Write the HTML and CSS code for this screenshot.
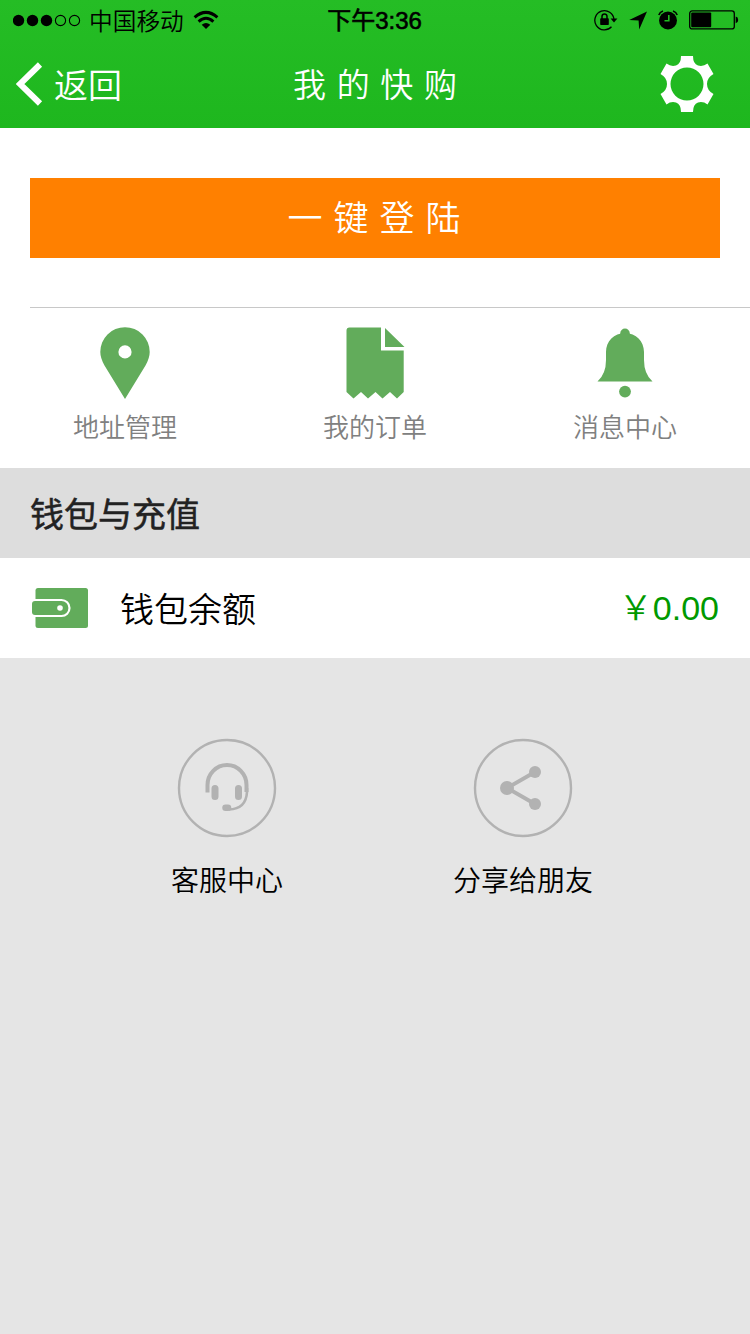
FILE: index.html
```html
<!DOCTYPE html>
<html lang="zh-CN">
<head>
<meta charset="utf-8">
<title>我的快购</title>
<link rel="stylesheet" href="styles.css">
</head>
<body>
<header class="top">
  <div class="status">
    <div class="status-left">
      <svg class="signal" width="69" height="14" viewBox="0 0 69 14">
        <circle cx="5.500" cy="7.500" r="5.700"/><circle cx="19.500" cy="7.500" r="5.700"/><circle cx="33.500" cy="7.500" r="5.700"/>
        <g fill="none" stroke="#000" stroke-width="1.1"><circle cx="47.500" cy="7.500" r="5.100"/><circle cx="61.500" cy="7.500" r="5.100"/></g>
      </svg>
      <span class="carrier">中国移动</span>
      <svg class="wifi" width="26" height="20" viewBox="0 0 26 20">
        <g fill="none" stroke="#000" stroke-width="3"><path d="M1.6 7.4Q13-2.6 24.4 7.4"/><path d="M5.6 11.6Q13 5 20.4 11.6"/></g>
        <path d="M13 19L8.7 14.8Q13 11.2 17.3 14.8Z"/>
      </svg>
    </div>
    <span class="time">下午3:36</span>
    <div class="status-right">
      <svg width="24" height="22" viewBox="0 0 24 22">
        <path d="M17.5 17.8A9.6 9.6 0 1 1 20 10.5" fill="none" stroke="#000" stroke-width="1.3"/>
        <path d="M16.6 9.6H23.4L20 13.6Z"/>
        <rect x="6.2" y="9.3" width="8.6" height="6.7" rx=".8"/>
        <path d="M8 10V7.4a2.5 2.5 0 0 1 5 0V10" fill="none" stroke="#000" stroke-width="1.5"/>
      </svg>
      <svg width="18" height="19" viewBox="0 0 18 19"><path d="M18 .5L10.2 18.5L9.6 9.6L.2 9Z"/></svg>
      <svg width="20" height="20" viewBox="0 0 20 20">
        <circle cx="10" cy="10.5" r="9"/>
        <path d="M.8 5Q1.8 2 5 1M19.2 5Q18.2 2 15 1" fill="none" stroke="#000" stroke-width="1.6"/>
        <path d="M10.8 5V10.8H6.5" fill="none" stroke="#20bb20" stroke-width="1.6"/>
      </svg>
      <svg width="50" height="20" viewBox="0 0 50 20">
        <rect x=".7" y=".9" width="44.6" height="18" rx="2.5" fill="none" stroke="#000" stroke-width="1.3"/>
        <rect x="2.2" y="2.6" width="20" height="14.6" rx="1"/>
        <path d="M46.7 6.5q2.5.5 2.5 3.4t-2.5 3.4z"/>
      </svg>
    </div>
  </div>
  <nav class="nav">
    <div class="back">
      <svg width="27" height="44" viewBox="0 0 27 44"><path d="M24 2.5L4 22L24 41.5" fill="none" stroke="#fff" stroke-width="6"/></svg>
      <span>返回</span>
    </div>
    <h1 class="title">我 的 快 购</h1>
    <svg class="gear" width="54" height="58" viewBox="-27 -29 54 58">
      <path fill="#fff" fill-rule="evenodd" d="M-6-28H6Q6-20 11-18.500Q16-17 20.500-20.500L26.500-10Q20-6.500 20 0Q20 6.500 26.500 10L20.500 20.500Q16 17 11 18.500Q6 20 6 28H-6Q-6 20-11 18.500Q-16 17-20.500 20.500L-26.500 10Q-20 6.500-20 0Q-20-6.500-26.500-10L-20.500-20.500Q-16-17-11-18.500Q-6-20-6-28ZM0-16.500A16.500 16.500 0 1 0 0 16.500A16.500 16.500 0 1 0 0-16.500Z"/>
    </svg>
  </nav>
</header>
<main>
  <section class="login"><button class="login-btn">一 键 登 陆</button></section>
  <section class="shortcuts">
    <div class="shortcut">
      <svg width="60" height="74" viewBox="0 0 60 74"><path fill="#62ac5b" fill-rule="evenodd" d="M30 1.2A24.7 24.7 0 0 1 54.7 26Q54.7 32 50.5 39.5L30 73L9.5 39.5Q5.3 32 5.3 26A24.7 24.7 0 0 1 30 1.2ZM30 19.3A6.6 6.6 0 1 0 30 32.5A6.6 6.6 0 1 0 30 19.3Z"/></svg>
      <span>地址管理</span>
    </div>
    <div class="shortcut">
      <svg width="60" height="74" viewBox="0 0 60 74"><path fill="#62ac5b" d="M4.5 1.5H36V24.500H58.700V66L52 72.500L45 66L37.500 72.500L30.500 66L23 72.500L16 66L8.500 72.500L1.500 66V4.500Q1.500 1.500 4.500 1.500ZM40 2L59.500 21H40Z"/></svg>
      <span>我的订单</span>
    </div>
    <div class="shortcut">
      <svg width="60" height="74" viewBox="0 0 60 74"><g fill="#62ac5b"><circle cx="30" cy="7.4" r="4.8"/><path d="M30 7C41 7 49 15.500 49 26V34Q49 48 57.500 55.500H2.500Q11 48 11 34V26C11 15.500 19 7 30 7Z"/><circle cx="30" cy="65.600" r="5.900"/></g></svg>
      <span>消息中心</span>
    </div>
  </section>
  <h2 class="section-title">钱包与充值</h2>
  <section class="balance">
    <svg width="57" height="42" viewBox="0 0 57 42">
      <rect x="3.500" y="1" width="52.500" height="40" rx="2.500" fill="#62ac5b"/>
      <path d="M3 13H29.500a8 8 0 0 1 0 16H3" fill="none" stroke="#fff" stroke-width="2.200"/>
      <rect x="0" y="14.100" width="12" height="13.800" rx="3" fill="#62ac5b"/>
      <circle cx="28" cy="21" r="2.800" fill="#fff"/>
    </svg>
    <span class="balance-name">钱包余额</span>
    <span class="amount"><span class="yen">￥</span>0.00</span>
  </section>
  <section class="services">
    <div class="service">
      <svg width="100" height="100" viewBox="0 0 100 100" fill="none" stroke="#b2b2b2">
        <circle cx="50" cy="50" r="48" stroke-width="2.400"/>
        <path d="M30.500 54.500V47A19.500 20 0 0 1 69.500 47V54" stroke-width="4"/>
        <path d="M70 50V54Q69 71 52 71.500" stroke-width="2.600"/>
        <path d="M38 50.500V58.500M61.500 50.500V58.500" stroke-width="7" stroke-linecap="round"/>
        <path d="M48.500 69.700H51" stroke-width="6.500" stroke-linecap="round"/>
      </svg>
      <span>客服中心</span>
    </div>
    <div class="service">
      <svg width="100" height="100" viewBox="0 0 100 100">
        <circle cx="50" cy="50" r="48" fill="none" stroke="#b2b2b2" stroke-width="2.400"/>
        <path d="M62 34L34 50L62 66" fill="none" stroke="#b2b2b2" stroke-width="4"/>
        <g fill="#b2b2b2"><circle cx="34" cy="50" r="7"/><circle cx="62" cy="34" r="6"/><circle cx="62" cy="66" r="6"/></g>
      </svg>
      <span>分享给朋友</span>
    </div>
  </section>
</main>
</body>
</html>
```
FILE: styles.css
```css
* { box-sizing: border-box; }
body {
  margin: 0;
  min-height: 1334px;
  background: #e5e5e5;
  color: #000;
  font-family: "Noto Sans CJK SC", sans-serif;
  font-weight: 350;
}
svg { display: block; flex: none; }
span { white-space: nowrap; }
h1, h2 { margin: 0; }
.top {
  height: 128px;
  background: linear-gradient(#25bd25, #1eb71e);
}
.status {
  display: grid;
  grid-template-columns: 1fr auto 1fr;
  align-items: center;
  height: 40px;
  padding: 0 11px 0 13px;
  font-size: 24px;
  line-height: 38px;
}
.status-left { display: flex; align-items: center; }
.carrier { margin-left: 7px; font-size: 23.7px; }
.wifi { margin-left: 9px; }
.time {
  margin-right: 3px;
  padding-top: 2px;
  font-family: "Liberation Sans", "Noto Sans CJK SC", sans-serif;
  font-weight: 400;
  -webkit-text-stroke: .6px #000;
}
.status-right { display: flex; align-items: center; justify-content: flex-end; gap: 11px; }
.nav {
  display: grid;
  grid-template-columns: 1fr auto 1fr;
  align-items: center;
  height: 88px;
  padding: 0 16px;
  color: #fff;
  font-size: 34px;
  line-height: 84px;
}
.back { display: flex; align-items: center; gap: 11px; }
.title {
  padding-bottom: 2px;
  font-size: 33px;
  font-weight: 350;
  word-spacing: 3.3px;
}
.gear { justify-self: end; margin-right: 20px; }
.login { padding: 50px 30px 49px; background: #fff; }
.login-btn {
  display: block;
  width: 100%;
  height: 80px;
  padding: 0 2px 5px 0;
  border: 0;
  background: #ff8000;
  color: #fff;
  font: 350 35px/70px "Noto Sans CJK SC", sans-serif;
  word-spacing: 3.2px;
}
.shortcuts {
  display: grid;
  grid-template-columns: repeat(3, 1fr);
  height: 161px;
  background: linear-gradient(#c8c8c8, #c8c8c8) 30px 0 / 100% 1px no-repeat #fff;
}
.shortcut {
  display: flex;
  flex-direction: column;
  align-items: center;
  padding-top: 19px;
  color: #808080;
  font-size: 26px;
  line-height: 52px;
}
.section-title {
  height: 90px;
  padding-left: 30px;
  background: #ddd;
  color: #222;
  font-size: 34px;
  font-weight: 400;
  line-height: 89px;
  -webkit-text-stroke: .5px #222;
}
.balance {
  display: flex;
  align-items: center;
  height: 100px;
  padding: 0 31px 0 32px;
  background: #fff;
  font-size: 34px;
  line-height: 96px;
}
.balance-name { margin-left: 31px; }
.amount {
  margin-left: auto;
  padding-bottom: 2px;
  color: #090;
  font-family: "Liberation Sans", sans-serif;
  font-weight: 400;
}
.yen { font-family: "Noto Sans CJK SC", sans-serif; font-weight: 350; }
.services {
  display: grid;
  grid-template-columns: 296px 296px;
  justify-content: center;
  padding-top: 80px;
}
.service {
  display: flex;
  flex-direction: column;
  align-items: center;
  gap: 22px;
  font-size: 28px;
  line-height: 38px;
}
```
